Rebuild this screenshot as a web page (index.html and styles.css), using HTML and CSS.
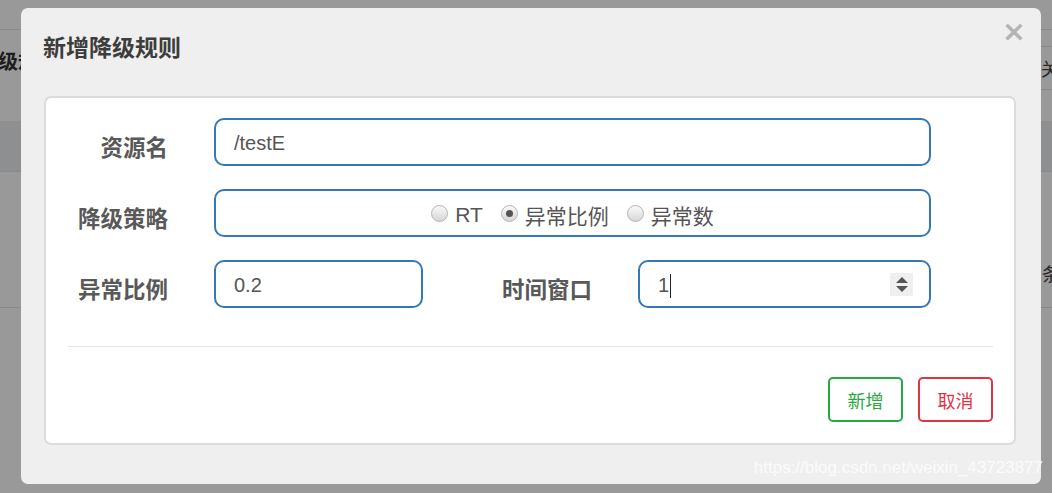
FILE: index.html
```html
<!DOCTYPE html>
<html lang="zh">
<head>
<meta charset="utf-8">
<title>新增降级规则</title>
<link rel="stylesheet" href="styles.css">
</head>
<body>
<div class="page">
  <div class="topbar"></div>
  <div class="page-head">
    <div class="page-title-clip"><h3 class="page-title">降级规则</h3></div>
    <div class="search-box">关键字</div>
  </div>
  <div class="table">
    <div class="thead"></div>
    <div class="trow"><span class="cell-right">条</span></div>
  </div>
</div>
<div class="backdrop"></div>

<div class="modal">
  <div class="modal-head">
    <h4 class="modal-title">新增降级规则</h4>
    <span class="close">×</span>
  </div>
  <div class="panel">
    <div class="form-row">
      <label class="label">资源名</label>
      <div class="field field-wide">/testE</div>
    </div>
    <div class="form-row">
      <label class="label">降级策略</label>
      <div class="field field-wide field-radios">
        <span class="radio-item"><span class="radio"></span>RT</span>
        <span class="radio-item"><span class="radio radio-on"></span>异常比例</span>
        <span class="radio-item"><span class="radio"></span>异常数</span>
      </div>
    </div>
    <div class="form-row">
      <label class="label">异常比例</label>
      <div class="field field-small">0.2</div>
      <label class="label label-second">时间窗口</label>
      <div class="field field-num">
        <span class="num-value">1<span class="caret"></span></span>
        <span class="spinner">
          <svg width="14" height="18" viewBox="0 0 14 18"><path d="M7 2 L13 8 L1 8 Z" fill="#555"/><path d="M1 11 L13 11 L7 17 Z" fill="#555"/></svg>
        </span>
      </div>
    </div>
    <div class="divider"></div>
    <div class="actions">
      <button class="btn btn-add">新增</button>
      <button class="btn btn-cancel">取消</button>
    </div>
  </div>
  <div class="watermark">https://blog.csdn.net/weixin_43723877</div>
</div>
</body>
</html>
```

FILE: styles.css
```css
html, body {
  margin: 0;
  padding: 0;
  width: 1052px;
  height: 493px;
  overflow: hidden;
  font-family: "Liberation Sans", "Noto Sans CJK SC", sans-serif;
  background: #fff;
}

.page {
  display: flex;
  flex-direction: column;
  width: 1052px;
}
.topbar {
  height: 29px;
  border-bottom: 1px solid #e4e4e4;
}
.page-head {
  height: 91px;
  display: flex;
  justify-content: space-between;
  align-items: flex-start;
}
.page-title-clip {
  width: 21px;
  overflow: hidden;
  margin-top: 16px;
}
.page-title {
  margin: 0 0 0 -22px;
  font-size: 20px;
  font-weight: bold;
  color: #333;
  white-space: nowrap;
  font-family: "Noto Sans CJK SC", sans-serif;
}
.search-box {
  margin-top: 16px;
  width: 60px;
  height: 42px;
  border-top: 1px solid #e4e4e4;
  border-bottom: 1px solid #e4e4e4;
  font-size: 18px;
  line-height: 42px;
  color: #444;
  margin-right: -49px;
  font-family: "Noto Sans CJK SC", sans-serif;
}
.thead {
  height: 50px;
  background: #edeef1;
  border-bottom: 1px solid #e4e4e4;
}
.trow {
  height: 136px;
  border-bottom: 1px solid #e4e4e4;
  display: flex;
  justify-content: flex-end;
  align-items: flex-start;
  box-sizing: border-box;
  padding-top: 88px;
}
.cell-right {
  margin-right: -8px;
  font-size: 18px;
  color: #444;
  font-family: "Noto Sans CJK SC", sans-serif;
}

.backdrop {
  position: absolute;
  left: 0;
  top: 0;
  width: 1052px;
  height: 493px;
  background: rgba(0, 0, 0, 0.4);
}

.modal {
  position: absolute;
  left: 21px;
  top: 8px;
  width: 1020px;
  height: 476px;
  background: #efefef;
  border-radius: 7px;
  box-sizing: border-box;
  padding: 0 25px 0 23px;
}
.modal-head {
  display: flex;
  justify-content: space-between;
  align-items: flex-start;
  height: 88px;
}
.modal-title {
  margin: 26px 0 0 -1px;
  font-size: 23px;
  line-height: 24px;
  font-weight: bold;
  color: #3d3d3d;
  font-family: "Noto Sans CJK SC", sans-serif;
}
.close {
  margin: 6px -10px 0 0;
  font-size: 29px;
  line-height: 34px;
  font-weight: bold;
  color: #b3b3b3;
  font-family: "DejaVu Sans", sans-serif;
}

.panel {
  background: #fff;
  border: 2px solid #dcdcdc;
  border-radius: 7px;
  padding: 20px 21px 21px 0;
  display: flex;
  flex-direction: column;
  gap: 23px;
  height: 349px;
  box-sizing: border-box;
}
.form-row {
  display: flex;
  align-items: center;
  padding-right: 62px;
}
.label {
  width: 122px;
  margin-right: 46px;
  padding-top: 7px;
  text-align: right;
  font-size: 22.5px;
  font-weight: bold;
  color: #595959;
  font-family: "Noto Sans CJK SC", sans-serif;
  flex-shrink: 0;
}
.label-second {
  width: 169px;
}
.field {
  height: 48px;
  box-sizing: border-box;
  border: 2px solid #3478b5;
  border-radius: 10px;
  display: flex;
  align-items: center;
  padding-left: 18px;
  padding-top: 3px;
  font-size: 20px;
  color: #555;
}
.field-wide {
  flex: 1;
}
.field-small {
  width: 209px;
  flex-shrink: 0;
}
.field-num {
  flex: 1;
  justify-content: space-between;
  padding-right: 16px;
}
.field-radios {
  justify-content: center;
  padding-left: 0;
  padding-top: 4px;
  gap: 18px;
  font-size: 21px;
  font-family: "Liberation Sans", "Noto Sans CJK SC", sans-serif;
  color: #555;
}
.radio-item {
  display: flex;
  align-items: center;
  gap: 7px;
}
.radio {
  width: 17px;
  height: 17px;
  box-sizing: border-box;
  border-radius: 50%;
  border: 1px solid #b5b5b5;
  background: linear-gradient(#fafafa, #d6d6d6);
  position: relative;
  margin-top: -4px;
}
.radio-on::after {
  content: "";
  position: absolute;
  left: 4px;
  top: 4px;
  width: 7px;
  height: 7px;
  border-radius: 50%;
  background: #555;
}
.num-value {
  display: flex;
  align-items: center;
}
.caret {
  display: inline-block;
  width: 1px;
  height: 24px;
  background: #222;
  margin-left: 1px;
}
.spinner {
  width: 23px;
  height: 23px;
  margin-top: -3px;
  background: #efefef;
  display: flex;
  align-items: center;
  justify-content: center;
}

.divider {
  height: 1px;
  background: #e5e5e5;
  margin: 15px 0 7px 22px;
}
.actions {
  display: flex;
  justify-content: flex-end;
  gap: 15px;
}
.btn {
  width: 75px;
  height: 45px;
  background: #fff;
  border-radius: 5px;
  font-size: 18px;
  font-family: "Noto Sans CJK SC", sans-serif;
  padding: 0;
}
.btn-add {
  border: 2px solid #28a745;
  color: #28a745;
}
.btn-cancel {
  border: 2px solid #dc3545;
  color: #dc3545;
}

.watermark {
  position: absolute;
  right: -2px;
  bottom: 6px;
  font-size: 17px;
  color: rgba(255, 255, 255, 0.75);
  font-family: "Liberation Sans", sans-serif;
  white-space: nowrap;
}
```
